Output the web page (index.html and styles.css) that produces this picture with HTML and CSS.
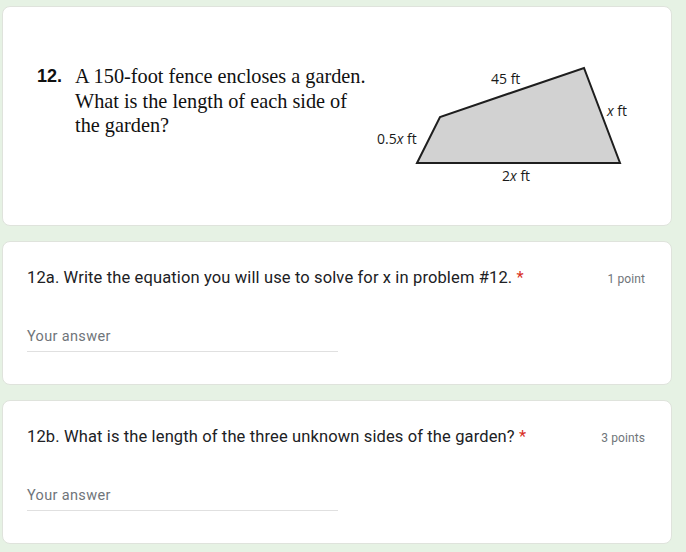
FILE: index.html
```html
<!DOCTYPE html>
<html>
<head>
<meta charset="utf-8">
<link rel="stylesheet" href="styles.css">
</head>
<body>
<div class="card card-image">
  <div class="problem">
    <span class="num">12.</span>
    <span class="ptext">A 150-foot fence encloses a garden.<br>What is the length of each side of<br>the garden?</span>
  </div>
  <svg class="diagram" width="270" height="130" viewBox="0 0 270 130">
    <polygon points="45,103 68,57 212,8 248,103" fill="#d2d2d2" stroke="#1e1e1e" stroke-width="2" stroke-linejoin="miter"/>
    <text x="119" y="24" class="lbl">45 ft</text>
    <text x="235" y="56" class="lbl"><tspan font-style="italic">x</tspan> ft</text>
    <text x="5" y="84" class="lbl">0.5<tspan font-style="italic">x</tspan> ft</text>
    <text x="130" y="121" class="lbl">2<tspan font-style="italic">x</tspan> ft</text>
  </svg>
</div>
<div class="card q">
  <div class="qhead">
    <div class="qtitle">12a. Write the equation you will use to solve for x in problem #12. <span class="req">*</span></div>
    <div class="pts">1 point</div>
  </div>
  <div class="answer">Your answer</div>
</div>
<div class="card q">
  <div class="qhead">
    <div class="qtitle">12b. What is the length of the three unknown sides of the garden? <span class="req">*</span></div>
    <div class="pts">3 points</div>
  </div>
  <div class="answer">Your answer</div>
</div>
</body>
</html>
```
FILE: styles.css
```css
html, body {
  background: #e6f2e4;
}
body {
  margin: 6px 14px 0 2px;
  font-family: Roboto, "Liberation Sans", sans-serif;
  color: #202124;
}
.card {
  background: #ffffff;
  border: 1px solid #dfe3dc;
  border-radius: 8px;
  box-sizing: border-box;
  margin-bottom: 15px;
}
.card-image {
  height: 220px;
  display: flex;
  align-items: flex-start;
  padding: 53px 0 0 34px;
}
.problem {
  width: 335px;
  display: flex;
  margin-top: 4px;
  white-space: nowrap;
}
.num {
  font-family: "Liberation Sans", Arial, sans-serif;
  font-weight: bold;
  font-size: 18px;
  line-height: 24px;
  width: 38px;
  flex: none;
  color: #111;
}
.ptext {
  font-family: "Liberation Serif", "Times New Roman", serif;
  font-size: 20.3px;
  line-height: 24.5px;
  color: #111;
}
.diagram {
  display: block;
  flex: none;
}
.lbl {
  font-family: "Open Sans", "Liberation Sans", sans-serif;
  font-size: 14px;
  fill: #1a1a1a;
}
.q {
  height: 144px;
  padding: 24px 26px 0 24px;
}
.qhead {
  display: flex;
  justify-content: space-between;
  align-items: baseline;
}
.qtitle {
  font-size: 16.5px;
  line-height: 24px;
  letter-spacing: 0.13px;
}
.req {
  color: #d93025;
}
.pts {
  font-size: 12px;
  letter-spacing: 0.1px;
  color: #70757a;
}
.answer {
  margin-top: 37px;
  width: 311px;
  font-size: 14.5px;
  line-height: 20px;
  letter-spacing: 0.35px;
  color: #70757a;
  padding-bottom: 4px;
  border-bottom: 1px solid #e0e0e0;
}
```
